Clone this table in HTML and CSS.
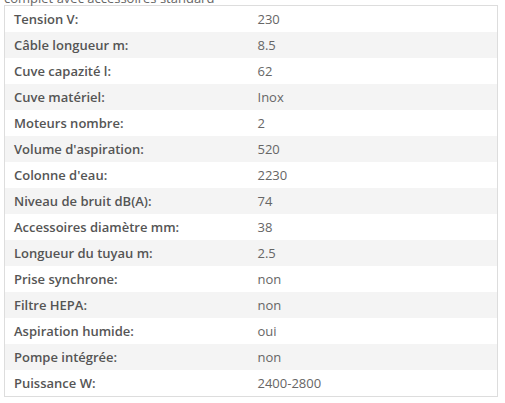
FILE: index.html
```html
<!DOCTYPE html>
<html lang="fr">
<head>
<meta charset="utf-8">
<link rel="stylesheet" href="styles.css">
</head>
<body>
<p class="intro">complet avec accessoires standard</p>
<table class="specs">
<colgroup><col class="col-label"><col class="col-value"></colgroup>
<tbody>
<tr><th>Tension V:</th><td>230</td></tr>
<tr><th>Câble longueur m:</th><td>8.5</td></tr>
<tr><th>Cuve capazité l:</th><td>62</td></tr>
<tr><th>Cuve matériel:</th><td>Inox</td></tr>
<tr><th>Moteurs nombre:</th><td>2</td></tr>
<tr><th>Volume d'aspiration:</th><td>520</td></tr>
<tr><th>Colonne d'eau:</th><td>2230</td></tr>
<tr><th>Niveau de bruit dB(A):</th><td>74</td></tr>
<tr><th>Accessoires diamètre mm:</th><td>38</td></tr>
<tr><th>Longueur du tuyau m:</th><td>2.5</td></tr>
<tr><th>Prise synchrone:</th><td>non</td></tr>
<tr><th>Filtre HEPA:</th><td>non</td></tr>
<tr><th>Aspiration humide:</th><td>oui</td></tr>
<tr><th>Pompe intégrée:</th><td>non</td></tr>
<tr><th>Puissance W:</th><td>2400-2800</td></tr>
</tbody>
</table>
</body>
</html>
```
FILE: styles.css
```css
html, body {
  margin: 0;
  padding: 0;
  background: #fff;
}
body {
  padding: 0 8px 0 4px;
  font-family: "Open Sans", "Liberation Sans", sans-serif;
  font-size: 13px;
  color: #666;
  overflow: hidden;
}
.intro {
  margin: -11px 0 -2px 0;
  line-height: 18px;
  color: #666;
}
.specs {
  width: 494px;
  border-collapse: collapse;
  border: 1px solid #ddd;
  table-layout: fixed;
}
.col-label {
  width: 244px;
}
.specs th,
.specs td {
  padding: 4px 9px;
  line-height: 18px;
  text-align: left;
  vertical-align: middle;
}
.specs th {
  font-weight: 600;
  color: #555;
}
.specs td {
  color: #666;
}
.specs tr:nth-child(even) {
  background: #f4f4f4;
}
```
